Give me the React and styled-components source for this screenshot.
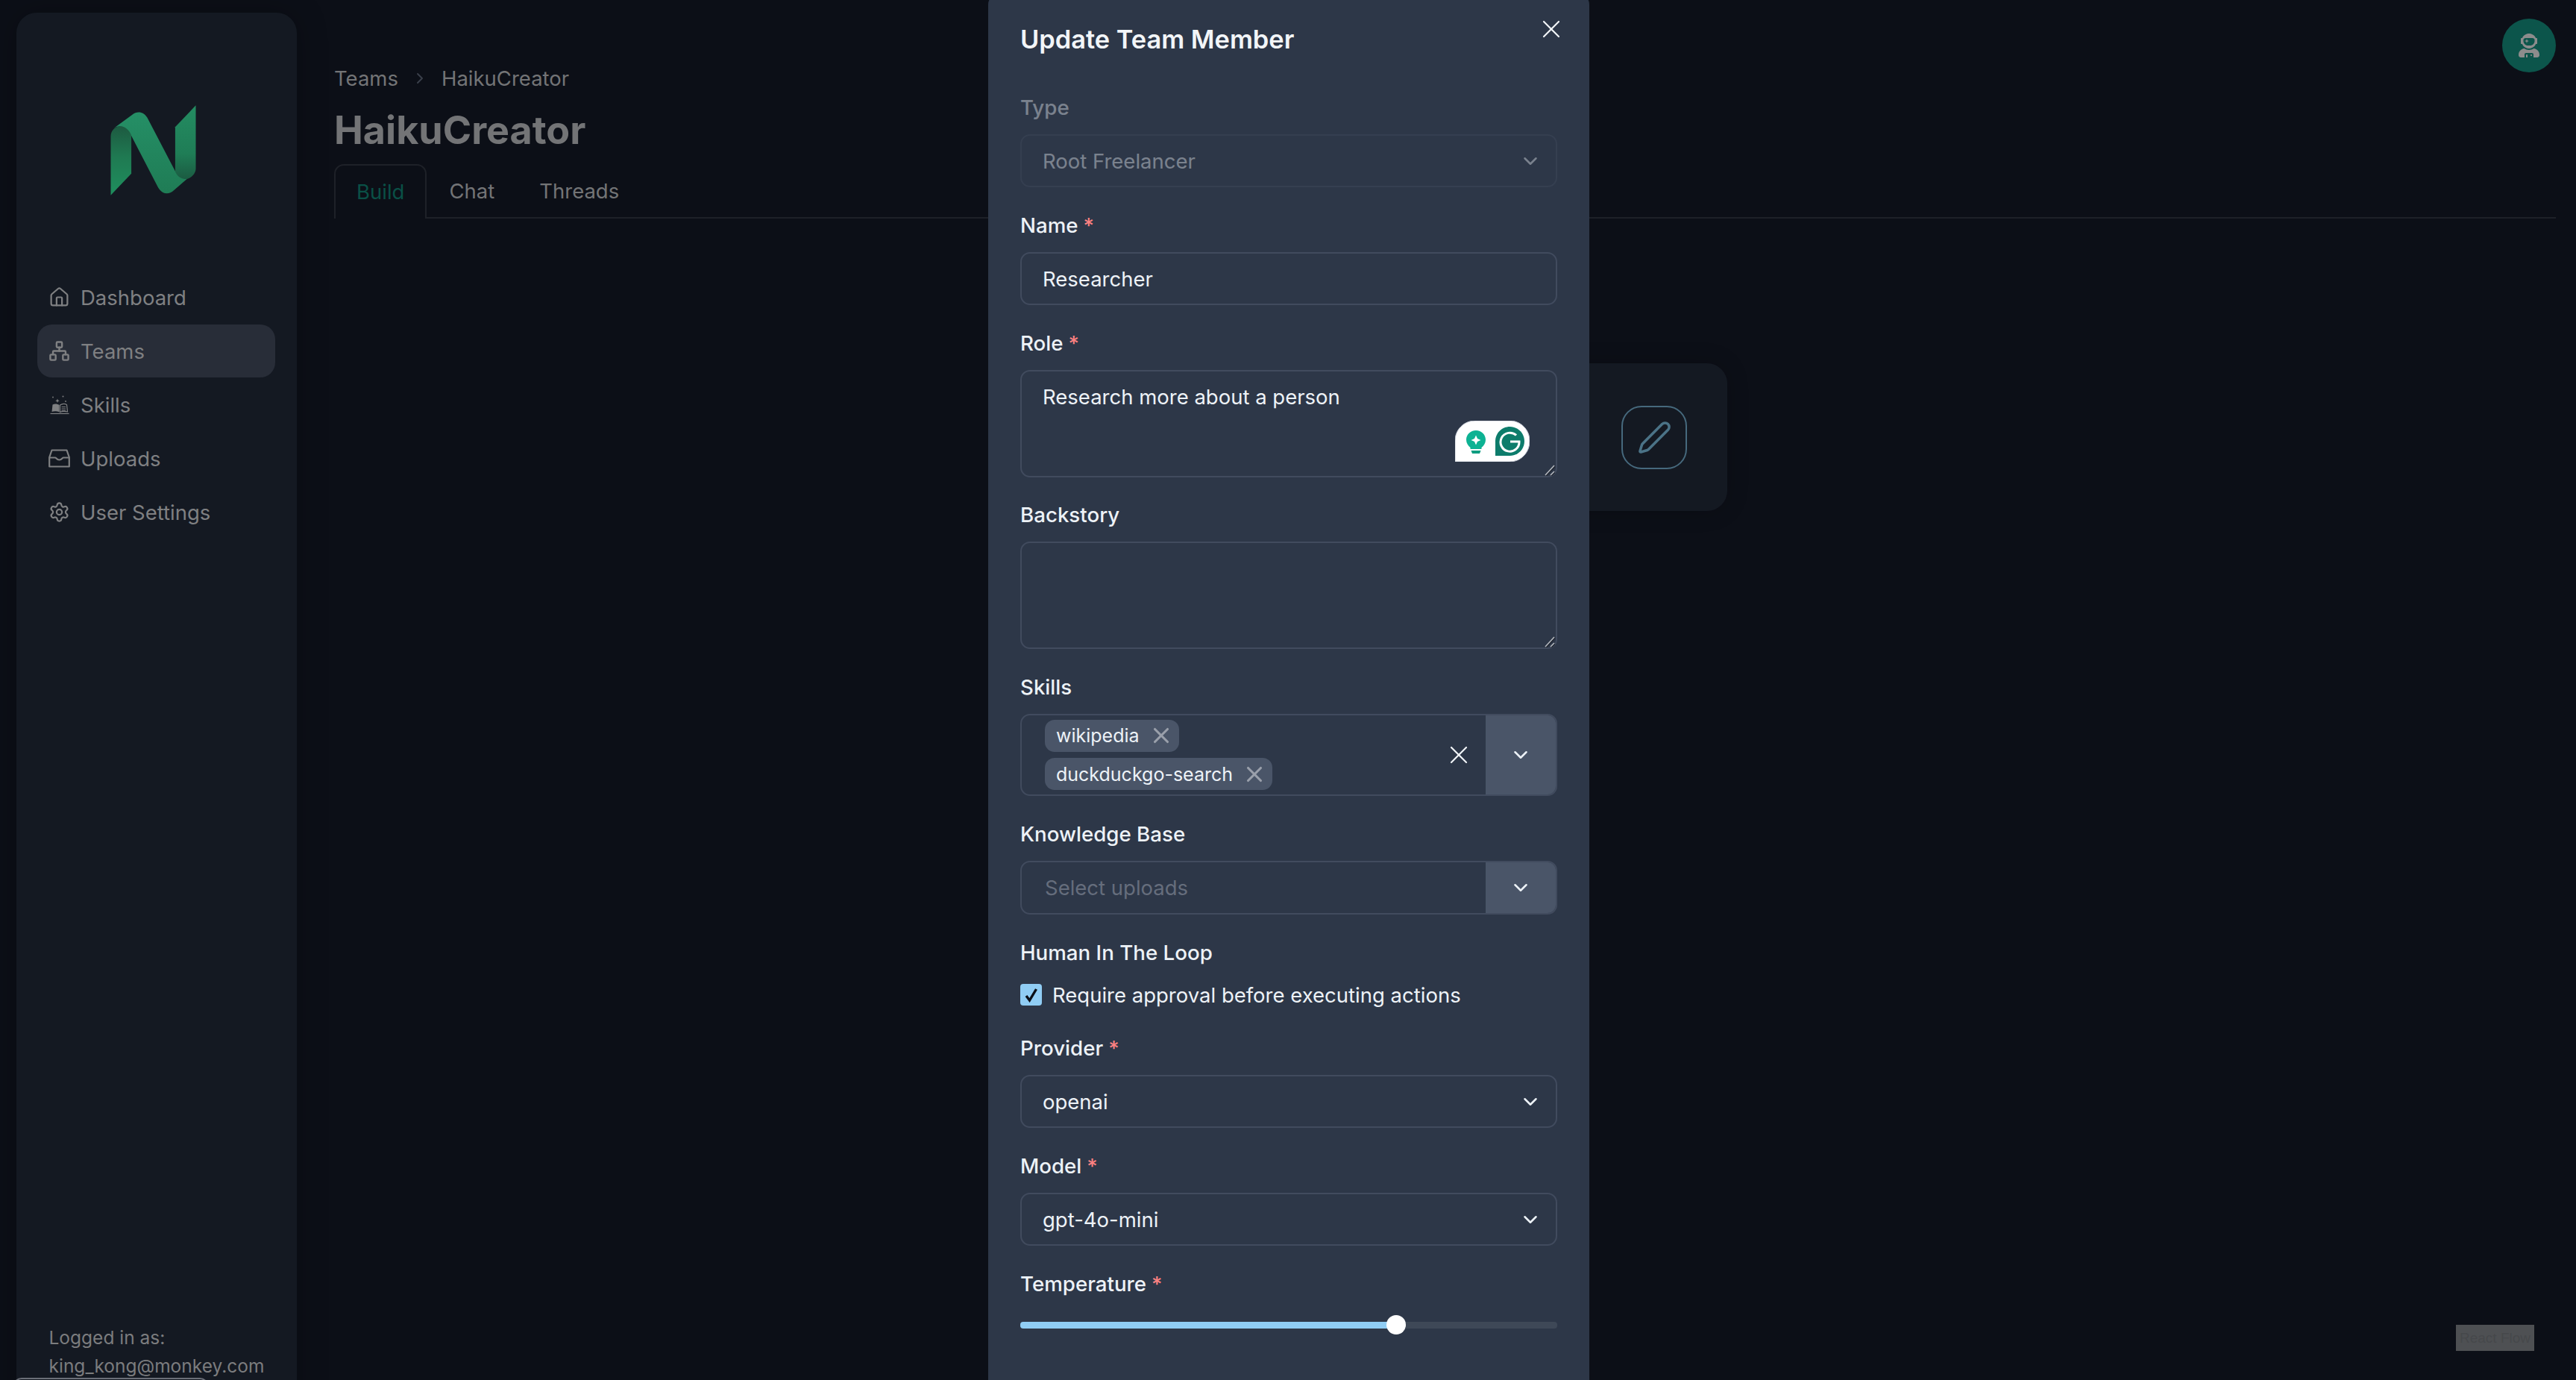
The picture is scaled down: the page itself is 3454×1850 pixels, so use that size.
import React from 'react';
import styled, { createGlobalStyle } from 'styled-components';
import { ChevronDown, ChevronRight, House, Network, Pen, Settings, X } from 'lucide-react';
import { FaUserAstronaut } from 'react-icons/fa';

const GlobalStyle = createGlobalStyle`
  html, body {
    margin: 0;
    padding: 0;
    background: #0c0f17;
    color-scheme: dark;
  }
  * {
    box-sizing: border-box;
  }
`;

const Page = styled.div`
  position: relative;
  display: flex;
  width: 100%;
  height: 100vh;
  overflow: hidden;
  background: #0c0f17;
  font-family: 'Inter', 'Noto Sans', sans-serif;
`;

const Sidebar = styled.aside`
  flex: none;
  display: flex;
  flex-direction: column;
  width: 376px;
  height: 1891px;
  margin: 17px 0 0 22px;
  padding: 124px 0 1px;
  background: #141922;
  border-radius: 27px 27px 0 0;
  box-shadow: 0 0 40px rgba(0, 0, 0, 0.25);
`;

const Logo = styled.svg`
  flex: none;
  width: 115px;
  height: 121px;
  margin-left: 126px;
`;

const Nav = styled.nav`
  display: flex;
  flex-direction: column;
  gap: 1px;
  margin: 101px 29px 0 28px;
`;

const NavItem = styled.div`
  display: flex;
  align-items: center;
  gap: 14px;
  height: 71px;
  padding-left: 15px;
  border-radius: 20px;
  font-size: 27.5px;
  color: #7f8082;
  background: ${(p) => (p.$active ? '#282d38' : 'transparent')};
`;

const NavIcon = styled.span`
  flex: none;
  display: flex;
  align-items: center;
  justify-content: center;
  width: 29px;
  height: 32px;
  color: #7f8082;
`;

const SideFooter = styled.div`
  margin-top: auto;
  padding-left: 43.5px;
  font-size: 24.5px;
  line-height: 38px;
  color: #7b7c7e;
`;

const LogoutButton = styled.div`
  width: 263px;
  height: 60px;
  margin: -3px 0 0 -48.5px;
  border: 2px solid #6b6f78;
  border-radius: 12px;
`;

const Main = styled.main`
  flex: 1;
  min-width: 0;
  padding: 86px 27px 0 50px;
`;

const Crumbs = styled.div`
  display: flex;
  align-items: center;
  gap: 17px;
  height: 37px;
  font-size: 27.5px;
  color: #737476;
`;

const CrumbSep = styled.span`
  display: flex;
  color: #3a3f4a;
`;

const Title = styled.h1`
  margin: 21.5px 0 15px;
  height: 60px;
  font-size: 52px;
  line-height: 60px;
  font-weight: 700;
  color: #737476;
`;

const Tabs = styled.div`
  display: flex;
  height: 73px;
  border-bottom: 2px solid #1e2128;
`;

const Tab = styled.div`
  display: flex;
  align-items: center;
  height: ${(p) => (p.$active ? '73px' : '71px')};
  padding: 0 28px;
  font-size: 27.5px;
  color: ${(p) => (p.$active ? '#0a5046' : '#737476')};
  background: ${(p) => (p.$active ? '#0c0f17' : 'transparent')};
  border: ${(p) => (p.$active ? '2px solid #1e2128' : '2px solid transparent')};
  border-bottom: none;
  border-radius: 13px 13px 0 0;
`;

const NodeCard = styled.div`
  position: absolute;
  top: 487px;
  left: 1856px;
  display: flex;
  align-items: center;
  justify-content: flex-end;
  width: 460px;
  height: 198px;
  padding-right: 54px;
  background: #141922;
  border-radius: 27px;
  box-shadow: 0 0 30px rgba(0, 0, 0, 0.2);
`;

const EditButton = styled.div`
  display: flex;
  align-items: center;
  justify-content: center;
  width: 88px;
  height: 85px;
  border: 2px solid #46697d;
  border-radius: 27px;
  color: #4b7387;
`;

const Attribution = styled.div`
  position: absolute;
  right: 56px;
  bottom: 39px;
  display: flex;
  align-items: center;
  justify-content: center;
  width: 105px;
  height: 35px;
  background: #4e5053;
  color: #46484b;
  font-family: 'Liberation Sans', Arial, sans-serif;
  font-size: 19px;
  white-space: nowrap;
`;

const Avatar = styled.div`
  position: absolute;
  top: 25px;
  right: 27px;
  display: flex;
  align-items: center;
  justify-content: center;
  width: 72px;
  height: 72px;
  border-radius: 50%;
  background: #0c554b;
  color: #8c8c8c;
`;

const Modal = styled.section`
  position: absolute;
  top: -8px;
  left: 1325px;
  width: 806px;
  height: 1880px;
  padding: 36px 43px 0 43px;
  background: #2d3748;
  border-radius: 14px;
  color: #edf2f7;
`;

const ModalTitle = styled.h2`
  margin: 0 0 49px;
  height: 50px;
  font-size: 34.4px;
  line-height: 50px;
  font-weight: 600;
  color: #f2f5f8;
`;

const CloseBtn = styled.div`
  position: absolute;
  top: 27px;
  right: 31px;
  display: flex;
  color: #f2f5f8;
`;

const Form = styled.div`
  display: flex;
  flex-direction: column;
  gap: 33.8px;
`;

const Field = styled.div`
  display: flex;
  flex-direction: column;
  opacity: ${(p) => (p.$disabled ? 0.4 : 1)};
`;

const Label = styled.label`
  height: 35px;
  margin-bottom: 18px;
  font-size: 27.7px;
  line-height: 35px;
  font-weight: 500;
`;

const Star = styled.span`
  margin-left: 7px;
  color: #fc8181;
`;

const TextInput = styled.input`
  width: 100%;
  height: 71px;
  padding: 2px 28px 0;
  border: 2px solid #414b5e;
  border-radius: 13px;
  background: transparent;
  color: #edf2f7;
  font-family: inherit;
  font-size: 27.5px;
  outline: none;
`;

const SelectWrap = styled.div`
  position: relative;
  height: 71px;
`;

const SelectBox = styled.select`
  width: 100%;
  height: 100%;
  padding: 1px 60px 0 28px;
  border: 2px solid #414b5e;
  border-radius: 13px;
  background: transparent;
  color: #edf2f7;
  font-family: inherit;
  font-size: 27.5px;
  appearance: none;
  outline: none;
`;

const SelectArrow = styled.span`
  position: absolute;
  top: 21px;
  right: 21px;
  display: flex;
  pointer-events: none;
`;

const AreaWrap = styled.div`
  position: relative;
  height: 144px;
`;

const TextArea = styled.textarea`
  display: block;
  width: 100%;
  height: 100%;
  padding: 16px 28px;
  border: 2px solid #414b5e;
  border-radius: 13px;
  background: transparent;
  color: #edf2f7;
  font-family: inherit;
  font-size: 27.5px;
  line-height: 37px;
  resize: none;
  outline: none;
`;

const ResizeGrip = styled.svg`
  position: absolute;
  right: 3px;
  bottom: 2px;
  width: 14px;
  height: 15px;
  pointer-events: none;
`;

const GrammarlyBadge = styled.svg`
  position: absolute;
  top: 68px;
  left: 583px;
  width: 100px;
  height: 55px;
`;

const Combo = styled.div`
  display: flex;
  align-items: stretch;
  height: ${(p) => p.$height}px;
  border: 2px solid #414b5e;
  border-radius: 13px;
  overflow: hidden;
`;

const ComboValue = styled.div`
  flex: 1;
  display: flex;
  flex-direction: column;
  justify-content: center;
  align-items: flex-start;
  gap: 8.5px;
  padding-left: 31px;
  font-size: 27.5px;
  color: #656d7c;
`;

const ClearBtn = styled.div`
  display: flex;
  align-items: center;
  margin-right: 16px;
  color: #f2f5f8;
`;

const ComboArrow = styled.div`
  flex: none;
  display: flex;
  align-items: center;
  justify-content: center;
  width: 94px;
  background: #4a5568;
`;

const Tag = styled.span`
  display: inline-flex;
  align-items: center;
  gap: 12px;
  height: 43px;
  padding: 0 7px 0 15px;
  border-radius: 13px;
  background: #4a5568;
  color: #edf2f7;
  font-size: 25px;
`;

const TagClose = styled.span`
  display: flex;
  color: #9aa0ab;
`;

const CheckRow = styled.div`
  display: flex;
  align-items: center;
  gap: 14px;
  height: 35px;
  margin-top: 3.5px;
  margin-bottom: 3px;
  font-size: 27.5px;
`;

const CheckBox = styled.span`
  flex: none;
  display: flex;
  align-items: center;
  justify-content: center;
  width: 29px;
  height: 29px;
  border-radius: 4px;
  background: #90cdf4;
  color: #0b0f17;
`;

const SliderTrack = styled.div`
  position: relative;
  height: 9px;
  margin-top: 15px;
  border-radius: 4px;
  background: #3e4857;
`;

const SliderFill = styled.div`
  height: 100%;
  border-radius: 4px;
  background: #90cdf4;
`;

const SliderThumb = styled.div`
  position: absolute;
  top: 50%;
  width: 26px;
  height: 26px;
  border-radius: 50%;
  background: #ffffff;
  transform: translate(-50%, -50%);
`;

const Required = () => <Star>*</Star>;

const Chevron = () => <ChevronDown size={30} strokeWidth={2} color="#edf2f7" />;

const Select = ({ value }) => (
  <SelectWrap>
    <SelectBox defaultValue={value}>
      <option>{value}</option>
    </SelectBox>
    <SelectArrow>
      <Chevron />
    </SelectArrow>
  </SelectWrap>
);

const Grip = () => (
  <ResizeGrip viewBox="0 0 14 15" fill="none" strokeWidth="1.6">
    <path d="M1 14L13 1M8 14L13 9" stroke="#1f2530" transform="translate(1 1)" />
    <path d="M1 14L13 1M8 14L13 9" stroke="#b4b8be" />
  </ResizeGrip>
);

const NLogo = () => (
  <Logo viewBox="85 62 343 364">
    <defs>
      <linearGradient id="nLeft" x1="0" y1="0" x2="0" y2="1">
        <stop offset="0" stopColor="#1d5a41" />
        <stop offset="0.45" stopColor="#1f7a52" />
        <stop offset="1" stopColor="#1f8f5e" />
      </linearGradient>
      <linearGradient id="nRight" x1="0" y1="0" x2="0" y2="1">
        <stop offset="0" stopColor="#248c62" />
        <stop offset="0.65" stopColor="#1f7d56" />
        <stop offset="1" stopColor="#1b5a41" />
      </linearGradient>
      <linearGradient id="nMid" x1="0" y1="0" x2="0" y2="1">
        <stop offset="0" stopColor="#258f66" />
        <stop offset="1" stopColor="#1f7c55" />
      </linearGradient>
    </defs>
    <path d="M85 425V187C85 165 102 147 125 147C150 147 168 165 168 190V338Z" fill="url(#nLeft)" />
    <path d="M345 150L428 63V318C428 340 405 362 380 362C360 362 345 348 345 325Z" fill="url(#nRight)" />
    <path d="M96 156L172 100C192 84 218 88 232 112L345 328C350 345 365 360 392 360L340 405C315 428 288 418 274 390L168 185C156 148 120 138 96 156Z" fill="url(#nMid)" />
  </Logo>
);

const BookIcon = () => (
  <svg width="26" height="26" viewBox="0 0 26 26" fill="none">
    <path d="M10 4.5l.8 2 2 .8-2 .8-.8 2-.8-2-2-.8 2-.8z" fill="currentColor" />
    <circle cx="4" cy="2.5" r="0.9" fill="currentColor" />
    <circle cx="17.5" cy="1.5" r="1" fill="currentColor" />
    <circle cx="21" cy="8" r="0.9" fill="currentColor" />
    <path d="M3.5 12.5C6 11 9.5 11 12.5 13V22.5C9.5 21 6 21 2.5 22Z" fill="currentColor" />
    <path d="M13.5 13C16.5 11 20 11 22.5 12.5L23.5 22C20 21 16.5 21 13.5 22.5Z" stroke="currentColor" strokeWidth="1.2" />
    <path d="M15.5 15.5h5.5M15.5 18h5.5M15.5 20.2h5.5" stroke="currentColor" strokeWidth="1.1" />
    <path d="M0.5 24.5h25" stroke="currentColor" strokeWidth="1.2" />
  </svg>
);

const InboxIcon = () => (
  <svg width="29" height="25" viewBox="0 0 29 25" fill="none" stroke="currentColor" strokeWidth="2.2" strokeLinejoin="round">
    <path d="M4.5 1.5H24.5L27.8 11V23.5H1.2V11Z" />
    <path d="M1.2 11.5H9C10.5 11.5 11 14.5 14.5 14.5C18 14.5 18.5 11.5 20 11.5H27.8" />
  </svg>
);

const Grammarly = () => (
  <GrammarlyBadge viewBox="0 0 100 55">
    <path d="M0 55V27C0 12 12 0 27 0H73C88 0 100 12 100 27C100 43 88 55 73 55Z" fill="#ffffff" stroke="#c9ced8" strokeWidth="1" />
    <path d="M28 13C20.5 13 15 18.8 15 25.5C15 30 17.5 33.5 20.5 36V38H35.5V36C38.5 33.5 41 30 41 25.5C41 18.8 35.5 13 28 13Z" fill="#0db293" />
    <path d="M21.5 40H34.5L33 44H23Z" fill="#0c9c80" />
    <path d="M28 19.5L30 24L34.5 26L30 28L28 32.5L26 28L21.5 26L26 24Z" fill="#ffffff" />
    <path d="M54 47V27.5C54 16.7 62.7 8 73.5 8C84.3 8 93 16.7 93 27.5C93 38.3 84.3 47 73.5 47Z" fill="#0d7c6b" />
    <path d="M82 19.5A12.5 12.5 0 1 0 86 28H74" fill="none" stroke="#ffffff" strokeWidth="3" />
  </GrammarlyBadge>
);

export default function App() {
  return (
    <Page>
      <GlobalStyle />
      <Sidebar>
        <NLogo />
        <Nav>
          <NavItem>
            <NavIcon><House size={31} strokeWidth={1.85} /></NavIcon>
            Dashboard
          </NavItem>
          <NavItem $active>
            <NavIcon><Network size={29} strokeWidth={2} /></NavIcon>
            Teams
          </NavItem>
          <NavItem>
            <NavIcon><BookIcon /></NavIcon>
            Skills
          </NavItem>
          <NavItem>
            <NavIcon><InboxIcon /></NavIcon>
            Uploads
          </NavItem>
          <NavItem>
            <NavIcon><Settings size={31} strokeWidth={1.85} /></NavIcon>
            User Settings
          </NavItem>
        </Nav>
        <SideFooter>
          Logged in as:
          <br />
          king_kong@monkey.com
          <LogoutButton />
        </SideFooter>
      </Sidebar>

      <Main>
        <Crumbs>
          <span>Teams</span>
          <CrumbSep><ChevronRight size={24} /></CrumbSep>
          <span>HaikuCreator</span>
        </Crumbs>
        <Title>HaikuCreator</Title>
        <Tabs>
          <Tab $active>Build</Tab>
          <Tab>Chat</Tab>
          <Tab>Threads</Tab>
        </Tabs>
      </Main>

      <NodeCard>
        <EditButton><Pen size={47} strokeWidth={1.8} /></EditButton>
      </NodeCard>
      <Attribution>React Flow</Attribution>
      <Avatar><FaUserAstronaut size={32} /></Avatar>

      <Modal>
        <ModalTitle>Update Team Member</ModalTitle>
        <CloseBtn><X size={40} strokeWidth={1.3} /></CloseBtn>
        <Form>
          <Field $disabled>
            <Label>Type</Label>
            <Select value="Root Freelancer" />
          </Field>
          <Field>
            <Label>Name<Required /></Label>
            <TextInput defaultValue="Researcher" />
          </Field>
          <Field>
            <Label>Role<Required /></Label>
            <AreaWrap>
              <TextArea defaultValue="Research more about a person" spellCheck={false} />
              <Grammarly />
              <Grip />
            </AreaWrap>
          </Field>
          <Field>
            <Label>Backstory</Label>
            <AreaWrap>
              <TextArea />
              <Grip />
            </AreaWrap>
          </Field>
          <Field>
            <Label>Skills</Label>
            <Combo $height={110}>
              <ComboValue>
                <Tag>wikipedia<TagClose><X size={34} strokeWidth={2.2} /></TagClose></Tag>
                <Tag>duckduckgo-search<TagClose><X size={34} strokeWidth={2.2} /></TagClose></Tag>
              </ComboValue>
              <ClearBtn><X size={40} strokeWidth={1.3} /></ClearBtn>
              <ComboArrow><Chevron /></ComboArrow>
            </Combo>
          </Field>
          <Field>
            <Label>Knowledge Base</Label>
            <Combo $height={72}>
              <ComboValue>Select uploads</ComboValue>
              <ComboArrow><Chevron /></ComboArrow>
            </Combo>
          </Field>
          <Field>
            <Label>Human In The Loop</Label>
            <CheckRow>
              <CheckBox>
                <svg width="20" height="20" viewBox="0 0 20 20" fill="none" stroke="currentColor" strokeWidth="3.4">
                  <path d="M3 11l4.5 6L16.5 2" />
                </svg>
              </CheckBox>
              Require approval before executing actions
            </CheckRow>
          </Field>
          <Field>
            <Label>Provider<Required /></Label>
            <Select value="openai" />
          </Field>
          <Field>
            <Label>Model<Required /></Label>
            <Select value="gpt-4o-mini" />
          </Field>
          <Field>
            <Label>Temperature<Required /></Label>
            <SliderTrack>
              <SliderFill style={{ width: `${0.7 * 100}%` }} />
              <SliderThumb style={{ left: `${0.7 * 100}%` }} />
            </SliderTrack>
          </Field>
        </Form>
      </Modal>
    </Page>
  );
}
